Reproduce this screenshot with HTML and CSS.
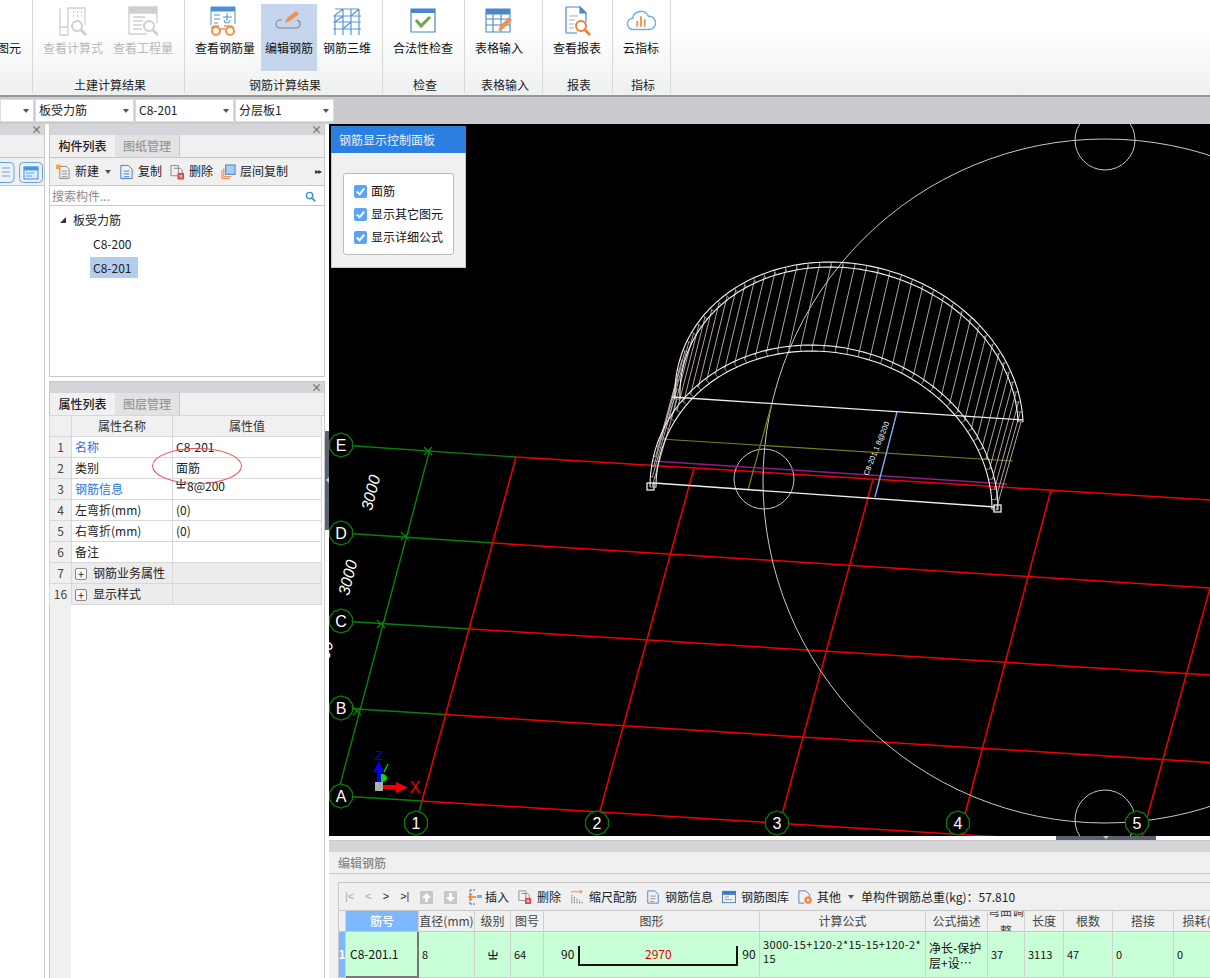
FILE: index.html
```html
<!DOCTYPE html>
<html lang="zh-CN">
<head>
<meta charset="utf-8">
<title>钢筋算量</title>
<link rel="stylesheet" href="styles.css">
</head>
<body>
<div class="app">
  <header class="ribbon">
    <section class="rib-group g0">
      <div class="rib-items end"><div class="rib-item"><span class="rib-icon"></span><span>图元</span></div></div>
      <div class="rib-label"></div>
    </section>
    <section class="rib-group g1">
      <div class="rib-items">
        <div class="rib-item off">
          <svg class="rib-icon" viewBox="0 0 30 30" fill="none" stroke="#cfcfcf" stroke-width="1.3"><path d="M2 2v27h8v-8H2M2 21h8M10 21V2h17v17"/><path d="M15 6h1M19 6h1M23 6h1M15 10h1M19 10h1M23 10h1" stroke-width="2"/><circle cx="19" cy="20" r="5" stroke-width="2"/><path d="M23 24l5 5" stroke-width="3"/></svg>
          <span>查看计算式</span>
        </div>
        <div class="rib-item off">
          <svg class="rib-icon" viewBox="0 0 30 30" fill="none" stroke="#cfcfcf" stroke-width="1.3"><path d="M1 1h28v6H1z" fill="#cfcfcf"/><path d="M1 7v21h18M29 7v10M5 11h12M5 15h10M5 19h9M5 23h9"/><circle cx="21" cy="20" r="5" stroke-width="2"/><path d="M25 24l5 5" stroke-width="3"/></svg>
          <span>查看工程量</span>
        </div>
      </div>
      <div class="rib-label">土建计算结果</div>
    </section>
    <section class="rib-group g2">
      <div class="rib-items">
        <div class="rib-item">
          <svg class="rib-icon" viewBox="0 0 30 30" fill="none" stroke="#4a90d9" stroke-width="1"><path d="M1 1h24v4H1z" fill="#4a90d9"/><path d="M1 5v14M25 5v13M4 9h6M4 13h6M4 17h4M13 11h9M17 7v8M20 14a3 3 0 0 1-6 0"/><path d="M1 22l3-2h5M14 20h7l3 2M10 23h5" stroke="#f0924a" stroke-width="1.6"/><circle cx="6" cy="25" r="4" stroke="#f0924a" stroke-width="2"/><circle cx="20" cy="25" r="4" stroke="#f0924a" stroke-width="2"/></svg>
          <span>查看钢筋量</span>
        </div>
        <div class="rib-item on">
          <svg class="rib-icon" viewBox="0 0 30 30" fill="none"><path d="M8 14H6a4 4 0 0 0 0 8h16a4 4 0 0 0 1-7.900" stroke="#7b8794" stroke-width="1.100"/><path d="M11 17l2-5 9-7 3 3-9 7z" fill="#f0924a"/></svg>
          <span>编辑钢筋</span>
        </div>
        <div class="rib-item">
          <svg class="rib-icon" viewBox="0 0 30 30" fill="none" stroke="#5b95d6" stroke-width="1.2"><path d="M3 9v20M11 3v26M19 3v26M27 3v26M3 9L11 3M3 3h24M1 10h28M1 16h28M1 23h28M3 16l8-6M11 23l8-7M19 10l8-7"/></svg>
          <span>钢筋三维</span>
        </div>
      </div>
      <div class="rib-label">钢筋计算结果</div>
    </section>
    <section class="rib-group g3">
      <div class="rib-items">
        <div class="rib-item">
          <svg class="rib-icon" viewBox="0 0 30 30" fill="none"><path d="M3 3h24v23H3z" stroke="#4a86c8" stroke-width="1.2"/><path d="M3 3h24v4H3z" fill="#4a86c8"/><path d="M8 14l5 6 9-9" stroke="#6aa84f" stroke-width="3"/></svg>
          <span>合法性检查</span>
        </div>
      </div>
      <div class="rib-label">检查</div>
    </section>
    <section class="rib-group g4">
      <div class="rib-items">
        <div class="rib-item">
          <svg class="rib-icon" viewBox="0 0 30 30" fill="none" stroke="#4a86c8" stroke-width="1.100"><path d="M2 3h24v5H2z" fill="#4a86c8"/><path d="M2 8v18h24V8M2 13h24M2 19h24M9 8v18M17 8v18"/><path d="M14 25l2-5 9-9 3 3-9 9z" fill="#f0924a" stroke="none"/></svg>
          <span>表格输入</span>
        </div>
      </div>
      <div class="rib-label">表格输入</div>
    </section>
    <section class="rib-group g5">
      <div class="rib-items">
        <div class="rib-item">
          <svg class="rib-icon" viewBox="0 0 30 30" fill="none" stroke="#4a86c8" stroke-width="1.200"><path d="M4 1h14l6 6v9M4 1v26h11"/><path d="M18 1l6 6h-6z" fill="#4a86c8"/><path d="M7 10h9M7 14h6M7 18h5M7 22h5" stroke="#aaa"/><circle cx="19" cy="20" r="5" stroke="#ee7d31" stroke-width="2"/><path d="M23 24l5 5" stroke="#ee7d31" stroke-width="2.600"/></svg>
          <span>查看报表</span>
        </div>
      </div>
      <div class="rib-label">报表</div>
    </section>
    <section class="rib-group g6">
      <div class="rib-items">
        <div class="rib-item">
          <svg class="rib-icon" viewBox="0 0 32 30" fill="none"><path d="M8 24a6 6 0 0 1-1-12 9 9 0 0 1 17-2 7 7 0 0 1 1 14z" stroke="#6ab0ee" stroke-width="1.500"/><path d="M12 15v6M16 10v11M20 13v8" stroke="#f0924a" stroke-width="2"/></svg>
          <span>云指标</span>
        </div>
      </div>
      <div class="rib-label">指标</div>
    </section>
    <div class="rib-rest"></div>
  </header>

  <div class="selects">
    <div class="sel w33"><span></span><i></i></div>
    <div class="sel"><span>板受力筋</span><i></i></div>
    <div class="sel"><span>C8-201</span><i></i></div>
    <div class="sel"><span>分层板1</span><i></i></div>
  </div>

  <main class="main">
    <aside class="col-a">
      <div class="pane-head"><b class="close">×</b></div>
      <div class="a-tabs"></div>
      <div class="a-tools">
        <svg viewBox="0 0 15 22" fill="none" stroke="#5aa6ee"><rect x="-8" y="1.500" width="22" height="20" rx="4"/><path d="M2 7h8M2 11h8M2 15h8"/></svg>
        <svg viewBox="0 0 24 22" fill="none" stroke="#5aa6ee"><rect x=".5" y="1.500" width="23" height="20" rx="4"/><rect x="5" y="6" width="14" height="12" fill="#dcecfb" stroke="#3d8fe0"/><path d="M5 6h14v3H5z" fill="#3d8fe0"/><path d="M7 12h8M7 15h6"/></svg>
      </div>
    </aside>

    <div class="col-b">
      <section class="pane pane-list">
        <div class="pane-head"><b class="close">×</b></div>
        <div class="tabs"><span class="tab active">构件列表</span><span class="tab">图纸管理</span></div>
        <div class="list-tools">
          <span class="tool"><svg viewBox="0 0 16 16" fill="none" stroke="#888"><path d="M4 2h7l3 3v10H4z"/><path d="M6 7h6M6 10h6M6 13h6"/><path d="M0 0h5v5H0z" fill="#f0a64a" stroke="none"/></svg>新建<i class="caret"></i></span>
          <span class="tool"><svg viewBox="0 0 16 16" fill="none" stroke="#3d7cc4"><path d="M2 1h8l4 4v10H2z"/><path d="M5 7h6M5 10h6M5 13h6"/></svg>复制</span>
          <span class="tool"><svg viewBox="0 0 16 16" fill="none" stroke="#888"><path d="M1 1h8v11H1z"/><path d="M4 4h7l2 2v4"/><path d="M8 9h7v7H8z" fill="#e0484a" stroke="none"/><path d="M10 11l3 3M13 11l-3 3" stroke="#fff"/></svg>删除</span>
          <span class="tool"><svg viewBox="0 0 16 16" fill="none" stroke="#ee7d31"><path d="M1 6v9h8M3 4v9h8"/><rect x="5" y="0.500" width="10" height="10" fill="#a8cdf5" stroke="#3d7cc4"/></svg>层间复制</span>
          <span class="more">▸▸</span>
        </div>
        <div class="search"><span>搜索构件...</span>
          <svg viewBox="0 0 12 12" fill="none" stroke="#3d8fd0" stroke-width="1.600"><circle cx="5" cy="5" r="3.500"/><path d="M8 8l3 3" stroke-width="2"/></svg>
        </div>
        <div class="tree">
          <div class="tree-root"><i></i>板受力筋</div>
          <div class="tree-leaf">C8-200</div>
          <div class="tree-leaf picked">C8-201</div>
        </div>
      </section>

      <section class="pane pane-props">
        <div class="pane-head"><b class="close">×</b></div>
        <div class="tabs"><span class="tab active">属性列表</span><span class="tab">图层管理</span></div>
        <div class="prop-wrap">
          <table class="props">
            <colgroup><col class="c-n"><col class="c-k"><col class="c-v"></colgroup>
            <thead><tr><th></th><th>属性名称</th><th>属性值</th></tr></thead>
            <tbody>
              <tr><th>1</th><td class="link">名称</td><td>C8-201</td></tr>
              <tr><th>2</th><td>类别</td><td>面筋</td></tr>
              <tr><th>3</th><td class="link">钢筋信息</td><td class="up"><svg class="grade" viewBox="0 0 9 9" fill="none" stroke="#222"><path d="M1 2v3h7V2M4.500 0v7M1 8h7"/></svg>8@200</td></tr>
              <tr><th>4</th><td>左弯折(mm)</td><td>(0)</td></tr>
              <tr><th>5</th><td>右弯折(mm)</td><td>(0)</td></tr>
              <tr><th>6</th><td>备注</td><td></td></tr>
              <tr class="grp"><th>7</th><td><i class="plus">+</i>钢筋业务属性</td><td></td></tr>
              <tr class="grp"><th>16</th><td><i class="plus">+</i>显示样式</td><td></td></tr>
            </tbody>
          </table>
          <div class="prop-foot"></div>
          <div class="mark"></div>
        </div>
      </section>
    </div>

    <div class="splitter"><i></i></div>

    <div class="col-c">
      <div class="view">
        <svg id="scene" class="scene" viewBox="329 124 881 712" font-family="'Liberation Sans',sans-serif">
          <defs>
            <polygon id="bub" points="11.400,3.700 7.050,9.700 0,12 -7.050,9.700 -11.400,3.700 -11.400,-3.700 -7.050,-9.700 0,-12 7.050,-9.700 11.400,-3.700" fill="#000" stroke="#0b7a0b" stroke-width="1.300"/>
          </defs>
          <g stroke="#0a800a" stroke-width="1.400" fill="none">
            <path d="M341 445L516 457M341 533L494 543M341 621L470 629M341 708L445 714.500M341 796L422 801"/>
            <path d="M416 823L422 801M597 823L600 811M777 823L780 822M430 449L336 800"/>
            <path d="M424 447l8 8M401 532l8 8M377 620l8 8M353 707l8 8M424 455l8-8M401 540l8-8M377 628l8-8M353 715l8-8"/>
          </g>
          <g stroke="#f00000" stroke-width="1.500" fill="none">
            <path d="M516 457L1210 500M494 543L1210 588M470 629L1210 675M445 714.500L1210 762.500M422 801L1210 850"/>
            <path d="M422 801L516 457M600 811L694 468M780 822L873 479M960 833L1051 490M1142 836L1210 588"/>
          </g>
          <g fill="none" stroke="#c8c8c8" stroke-width="1">
            <circle cx="1105" cy="481" r="342"/>
            <circle cx="1105" cy="140" r="30"/>
            <circle cx="764" cy="479" r="30"/>
            <circle cx="1105" cy="820" r="30"/>
          </g>
          <g fill="none" stroke-width="1.200">
            <path d="M660 439L1013 461M772 403L748 490" stroke="#80801a"/>
            <path d="M653 461L1007 484" stroke="#8a1f8a" stroke-width="1.500"/>
            <path d="M897 412L875 497" stroke="#7fa8f0" stroke-width="1.400"/>
          </g>
          <g id="arch" fill="none"></g>
          <g fill="none" stroke="#eee" stroke-width="1.300">
            <path d="M654 483L995 507M672 397L1023 420"/>
            <rect x="647" y="483" width="7" height="7"/>
            <rect x="994" y="505" width="7" height="7"/>
          </g>
          <text transform="translate(868 476) rotate(-68)" fill="#fff" font-size="7.500">C8-201.1 8@200</text>
          <g fill="#fff" font-size="16">
            <text transform="translate(376 494) rotate(-76)" text-anchor="middle" font-style="italic">3000</text>
            <text transform="translate(353 579) rotate(-76)" text-anchor="middle" font-style="italic">3000</text>
            <text transform="translate(329 660) rotate(-76)" text-anchor="middle" font-style="italic">3000</text>
          </g>
          <g fill="#fff" font-size="16" text-anchor="middle">
            <use href="#bub" x="341" y="445"/><text x="341" y="451">E</text>
            <use href="#bub" x="341" y="533"/><text x="341" y="539">D</text>
            <use href="#bub" x="341" y="621"/><text x="341" y="627">C</text>
            <use href="#bub" x="341" y="708"/><text x="341" y="714">B</text>
            <use href="#bub" x="341" y="796"/><text x="341" y="802">A</text>
            <use href="#bub" x="416" y="823"/><text x="416" y="829">1</text>
            <use href="#bub" x="597" y="823"/><text x="597" y="829">2</text>
            <use href="#bub" x="777" y="823"/><text x="777" y="829">3</text>
            <use href="#bub" x="958" y="823"/><text x="958" y="829">4</text>
            <use href="#bub" x="1137" y="823"/><text x="1137" y="829">5</text>
          </g>
          <g>
            <ellipse cx="382" cy="778" rx="5" ry="4" fill="#00e000"/>
            <path d="M384 772l4-8" stroke="#00e000" stroke-width="1.200"/>
            <path d="M379 782v-14" stroke="#0000f0" stroke-width="4"/>
            <path d="M373.500 772L378.500 761L384 772z" fill="#0000f0"/>
            <path d="M382 787h16" stroke="#f00000" stroke-width="4"/>
            <path d="M396 782L408 787.500L396 793z" fill="#f00000"/>
            <rect x="375" y="782" width="8" height="9" fill="#b0b0b0"/>
            <text x="379" y="760" fill="#0000f0" font-size="13" text-anchor="middle">Z</text>
            <text x="415" y="793" fill="#f00000" font-size="16" text-anchor="middle">X</text>
          </g>
        </svg>

        <div class="ctl">
          <div class="ctl-title">钢筋显示控制面板</div>
          <div class="ctl-body">
            <div class="ctl-box">
              <label class="chk"><i><svg viewBox="0 0 14 14" fill="none" stroke="#fff" stroke-width="2.200"><path d="M3 7l3 3 5-6"/></svg></i>面筋</label>
              <label class="chk"><i><svg viewBox="0 0 14 14" fill="none" stroke="#fff" stroke-width="2.200"><path d="M3 7l3 3 5-6"/></svg></i>显示其它图元</label>
              <label class="chk"><i><svg viewBox="0 0 14 14" fill="none" stroke="#fff" stroke-width="2.200"><path d="M3 7l3 3 5-6"/></svg></i>显示详细公式</label>
            </div>
          </div>
        </div>
      </div>

      <div class="view-gap"><div class="handle"></div></div>

      <section class="editor">
        <div class="ed-head"></div>
        <div class="ed-title">编辑钢筋</div>
        <div class="ed-box">
          <div class="ed-tools">
            <span class="nav"><em class="dim">|&lt;</em><em class="dim">&lt;</em><em>&gt;</em><em>&gt;<u>|</u></em></span>
            <svg class="sq" viewBox="0 0 13 13"><rect width="13" height="13" fill="#c8c8c8"/><path d="M6.500 2L11 7H8v4H5V7H2z" fill="#fff"/></svg>
            <svg class="sq sq2" viewBox="0 0 13 13"><rect width="13" height="13" fill="#c8c8c8"/><path d="M6.500 11L11 6H8V2H5v4H2z" fill="#fff"/></svg>
            <span class="tool t-ins"><svg viewBox="0 0 14 16" fill="none" stroke="#666"><path d="M2 1h5M2 15h5M2 1v14" stroke-dasharray="2 1"/><path d="M8 8H1M4 5L1 8l3 3" stroke="#ee7d31" stroke-width="1.400"/><path d="M9 6h5v3H9z" fill="#6ab0ee" stroke="none"/></svg>插入</span>
            <span class="tool"><svg viewBox="0 0 16 16" fill="none" stroke="#888"><path d="M1 1h8v11H1z"/><path d="M4 4h7l2 2v4"/><path d="M8 9h7v7H8z" fill="#e0484a" stroke="none"/><path d="M10 11l3 3M13 11l-3 3" stroke="#fff"/></svg>删除</span>
            <span class="tool"><svg viewBox="0 0 16 16" fill="none" stroke="#6a7a8a"><path d="M1 2h12" stroke="#ee7d31"/><path d="M11 0l3 2-3 2" stroke="#ee7d31"/><path d="M2 15V6M5 15V8M8 15V10M11 15v-3M14 15v-1" stroke-dasharray="1 1" stroke-width="1.400"/></svg>缩尺配筋</span>
            <span class="tool"><svg viewBox="0 0 16 16" fill="none" stroke="#3d7cc4"><path d="M2 1h8l4 4v10H2z"/><path d="M5 7h6M5 10h6M5 13h4" stroke="#888"/></svg>钢筋信息</span>
            <span class="tool"><svg viewBox="0 0 16 16" fill="none" stroke="#3d7cc4"><rect x=".5" y="1.500" width="15" height="13"/><path d="M1 2h14v3H1z" fill="#3d7cc4"/><path d="M3 8h5M3 11h9" stroke="#ee7d31"/></svg>钢筋图库</span>
            <span class="tool"><svg viewBox="0 0 16 16" fill="none" stroke="#3d7cc4"><path d="M1 1h8l4 4v3M1 1v14h6"/><circle cx="11.500" cy="11.500" r="3" stroke="#ee7d31" stroke-width="2.400"/></svg>其他<i class="caret"></i></span>
            <span class="total">单构件钢筋总重(kg)：57.810</span>
          </div>
          <div class="sheet">
            <div class="h c0"></div>
            <div class="h key">筋号</div>
            <div class="h">直径(mm)</div>
            <div class="h">级别</div>
            <div class="h">图号</div>
            <div class="h">图形</div>
            <div class="h">计算公式</div>
            <div class="h">公式描述</div>
            <div class="h wrap">弯曲调整</div>
            <div class="h">长度</div>
            <div class="h">根数</div>
            <div class="h">搭接</div>
            <div class="h">损耗(%)</div>

            <div class="d num">1</div>
            <div class="d sel-cell">C8-201.1</div>
            <div class="d sm">8</div>
            <div class="d ctr"><svg class="grade big" viewBox="0 0 9 9" fill="none" stroke="#111"><path d="M1 2v3h7V2M4.500 0v7M1 8h7"/></svg></div>
            <div class="d sm">64</div>
            <div class="d shape"><span>90</span><div class="u">2970</div><span>90</span></div>
            <div class="d formula">3000-15+120-2*15-15+120-2*<br>15</div>
            <div class="d desc">净长-保护<br>层+设…</div>
            <div class="d sm">37</div>
            <div class="d sm">3113</div>
            <div class="d sm">47</div>
            <div class="d sm">0</div>
            <div class="d sm">0</div>
          </div>
        </div>
      </section>
    </div>
  </main>
</div>
<script src="canvas.js"></script>
</body>
</html>
```

FILE: styles.css
```css
* { box-sizing: border-box; }
html, body { margin: 0; padding: 0; background: #fff; }
body { width: 1210px; height: 978px; overflow: hidden; font: 12px/1.2 "Noto Sans CJK SC", "Noto Sans", sans-serif; color: #222; }
i, em { font-style: normal; }
.app { width: 1210px; height: 978px; display: flex; flex-direction: column; }

/* ribbon */
.ribbon { height: 97px; flex: none; display: flex; background: linear-gradient(#ffffff 30%, #eef0f0); border-bottom: 2px solid #96989b; }
.rib-group { flex: none; display: flex; flex-direction: column; border-right: 1px solid #d6d8d8; height: 93px; padding: 4px 6px 0; }
.g0 { width: 33px; padding: 4px 0 0; overflow: hidden; }
.g1 { width: 152px; } .g2 { width: 198px; } .g3 { width: 82px; } .g4 { width: 78px; } .g5 { width: 70px; } .g6 { width: 58px; }
.rib-items { display: flex; gap: 2px; height: 67px; }
.rib-items.end { justify-content: flex-end; padding-right: 4px; }
.rib-item { padding: 2px 4px 0; display: flex; flex-direction: column; align-items: center; height: 67px; white-space: nowrap; color: #111; }
.g0 .rib-item { padding: 2px 4px 0 0; }
.rib-item.on { background: #c5d6ec; }
.rib-item.off { color: #b9b9b9; }
.rib-icon { display: block; width: 30px; height: 30px; margin-bottom: 5px; flex: none; }
.rib-label { text-align: center; margin-top: 7px; padding-left: 3px; color: #222; white-space: nowrap; }
.rib-rest { flex: 1; }

/* selects */
.selects { height: 27px; flex: none; display: flex; gap: 1px; background: #c9cbce; padding: 2px 0 0; }
.sel { width: 99px; height: 23px; background: #fff; border: 1px solid #dcdcdc; display: flex; align-items: center; justify-content: space-between; padding: 0 4px 0 3px; font-size: 12px; }
.sel.w33 { width: 34px; }
.sel i { width: 0; height: 0; border: 3px solid transparent; border-top: 4px solid #555; border-bottom: 0; }

/* columns */
.main { flex: 1; display: flex; min-height: 0; }
.col-a { width: 45px; flex: none; border-right: 1px solid #c8c8c8; margin-right: 4px; background: #fff; }
.col-b { width: 276px; flex: none; display: flex; flex-direction: column; gap: 4px; }
.splitter { width: 4px; flex: none; position: relative; background: #fff; }
.splitter i { position: absolute; left: 0; top: 307px; width: 4px; height: 99px; background: #5a6470; }
.splitter i::after { content: ""; position: absolute; left: 1px; top: 46px; border: 3px solid transparent; border-right: 3px solid #c8ccd0; border-left: 0; }
.col-c { flex: 1; min-width: 0; display: flex; flex-direction: column; }

.pane-head { height: 11px; background: #d3d5d8; position: relative; }
.close { position: absolute; right: 2px; top: -1px; font-size: 11px; line-height: 12px; font-weight: 700; color: #777; }

.a-tabs { height: 23px; background: #f0f0f0; border-bottom: 1px solid #c8c8c8; }
.a-tools { height: 28px; background: #f0f0f0; border-bottom: 1px solid #c8c8c8; display: flex; gap: 4px; align-items: center; }
.a-tools svg { display: block; height: 22px; flex: none; }
.a-tools svg:first-child { width: 15px; }
.a-tools svg:last-child { width: 24px; }

.pane { border-left: 1px solid #c8c8c8; border-right: 1px solid #c8c8c8; background: #fff; display: flex; flex-direction: column; }
.pane-list { height: 253px; border-bottom: 1px solid #c8c8c8; flex: none; }
.pane-props { flex: 1; min-height: 0; border-top: 1px solid #c8c8c8; }
.tabs { height: 23px; background: #f0f0f0; display: flex; border-bottom: 1px solid #c8c8c8; flex: none; }
.tab { width: 65px; text-align: center; line-height: 22px; font-weight: 500; color: #999; background: #e2e2e2; border-right: 1px solid #c8c8c8; }
.tab.active { color: #222; background: #f0f0f0; border-right: 0; }

.list-tools { height: 28px; flex: none; background: #f0f0f0; border-bottom: 1px solid #c8c8c8; display: flex; align-items: center; padding-left: 6px; gap: 8px; position: relative; }
.tool { display: inline-flex; align-items: center; gap: 4px; white-space: nowrap; color: #222; }
.tool svg { width: 15px; height: 16px; flex: none; display: block; }
.caret { width: 0; height: 0; border: 3px solid transparent; border-top: 4px solid #555; border-bottom: 0; margin-left: 2px; }
.more { position: absolute; right: 3px; top: 8px; font-size: 8px; letter-spacing: -1px; color: #333; }

.search { height: 20px; flex: none; border-bottom: 1px solid #c8c8c8; display: flex; align-items: center; justify-content: space-between; padding: 2px 8px 0 2px; color: #8a8a8a; }
.search svg { width: 11px; height: 11px; }
.tree { flex: 1; padding: 3px 0 0; position: relative; }
.tree-root { height: 21px; line-height: 21px; padding-left: 23px; position: relative; color: #222; }
.tree-root i { position: absolute; left: 10px; top: 8px; width: 0; height: 0; border-left: 6px solid transparent; border-bottom: 6px solid #333; }
.tree-leaf { height: 21px; line-height: 21px; margin: 3px 0 0 40px; padding: 0 3px; width: 48px; color: #222; }
.tree-leaf.picked { background: #b3cdec; }

/* properties */
.prop-wrap { flex: 1; position: relative; min-height: 0; background: #fff; }
.props { width: 272px; border-collapse: collapse; table-layout: fixed; margin: -1px 0 0 -1px; }
.c-n { width: 22px; } .c-k { width: 101px; } .c-v { width: 149px; }
.props th, .props td { height: 21px; padding: 0; border: 1px solid #d8d8d8; font-weight: 400; white-space: nowrap; overflow: hidden; }
.props thead th { background: #f0f0f0; text-align: center; color: #333; }
.props tbody th { background: #f0f0f0; text-align: center; color: #444; }
.props td { padding-left: 3px; }
.props .link { color: #2d6fe0; }
.props .up { vertical-align: top; }
.grp td { background: #ececec; }
.plus { display: inline-block; width: 12px; height: 12px; border: 1px solid #888; border-radius: 2px; text-align: center; line-height: 10px; margin: 0 6px 0 0; vertical-align: -1px; font-size: 11px; background: #fafafa; }
.grade { width: 10px; height: 10px; display: inline-block; vertical-align: 2px; margin-right: 1px; }
.grade.big { width: 10px; height: 10px; vertical-align: middle; margin-right: 0; }
.prop-foot { position: absolute; left: 0; top: 188px; bottom: 0; width: 21px; background: #f0f0f0; }
.mark { position: absolute; left: 102px; top: 32px; width: 90px; height: 36px; border: 1px solid #e8505a; border-radius: 50%; }

/* viewport */
.view { height: 712px; flex: none; position: relative; background: #000; overflow: hidden; }
.scene { display: block; width: 881px; height: 712px; }
.ctl { position: absolute; left: 2px; top: 2px; width: 135px; height: 142px; background: #f0f0f0; border: 1px solid #c8c8c8; border-top: 0; }
.ctl-title { height: 27px; background: #2b7fe0; color: #e8f2ff; line-height: 27px; padding-left: 8px; margin: 0 -1px 0 -1px; }
.ctl-body { padding: 20px 11px 0; }
.ctl-box { height: 82px; background: #fff; border: 1px solid #bdbdbd; border-radius: 3px; padding: 6px 0 0 10px; }
.chk { display: flex; align-items: center; gap: 4px; height: 23px; color: #111; }
.chk i { width: 13px; height: 13px; background: #5ba4f5; border-radius: 2px; display: block; flex: none; }
.chk svg { display: block; width: 13px; height: 13px; }

.view-gap { height: 4px; flex: none; background: #fff; position: relative; }
.handle { position: absolute; left: 727px; top: 0; width: 100px; height: 4px; background: #5a6470; }
.handle::after { content: ""; position: absolute; left: 47px; top: 0; border: 3px solid transparent; border-top: 3px solid #c8ccd0; border-bottom: 0; }

/* editor */
.editor { flex: 1; min-height: 0; background: #f0f0f0; overflow: hidden; }
.ed-head { height: 12px; background: #d3d5d8; border-top: 1px solid #c8c8c8; }
.ed-title { height: 22px; line-height: 21px; padding-left: 9px; color: #888; font-weight: 500; border-bottom: 1px solid #c8c8c8; }
.ed-box { margin: 8px 0 0 9px; border-top: 1px solid #c8c8c8; border-left: 1px solid #c8c8c8; width: 900px; }
.ed-tools { height: 27px; display: flex; align-items: center; gap: 9px; padding: 1px 0 0 6px; white-space: nowrap; }
.nav { display: flex; width: 66px; flex: none; color: #222; font-family: "Liberation Sans", sans-serif; font-size: 11px; gap: 11px; }
.nav .dim { color: #aaa; }
.nav u { text-decoration: none; color: #8a2020; }
.sq { width: 13px; height: 13px; flex: none; }
.sq2 { margin-left: 2px; }
.t-ins { margin-left: 2px; }
.ed-tools .tool { gap: 5px; }
.ed-tools .tool svg { width: 14px; }
.ed-tools .t-ins { gap: 3px; }
.total { margin-left: -2px; }

.sheet { display: grid; grid-template-columns: 7px 73px 56px 36px 33px 216px 166px 62px 37px 39px 49px 61px 61px; grid-template-rows: 22px 46px; }
.h { background: #f0f0f0; border-top: 1px solid #c8c8c8; border-right: 1px solid #d0d0d0; border-bottom: 1px solid #c8c8c8; text-align: center; line-height: 20px; color: #444; white-space: nowrap; overflow: hidden; }
.h.key { background: #7cb8fb; color: #fff; font-weight: 500; }
.h.wrap { white-space: normal; display: flex; align-items: center; justify-content: center; line-height: 20px; }
.d { background: #c9ffd6; border-right: 1px solid #d0d0d0; border-bottom: 1px solid #d0d0d0; display: flex; align-items: center; overflow: hidden; color: #111; }
.d.num { background: #7cb8fb; color: #fff; font-weight: 700; justify-content: center; }
.d.sel-cell { border-right: 2px solid #777; border-bottom: 2px solid #777; padding-left: 4px; font-size: 12px; }
.d.sm { padding-left: 3px; font-size: 11px; }
.d.ctr { justify-content: center; }
.d.shape { padding-left: 17px; gap: 4px; font-size: 12px; }
.u { width: 160px; height: 20px; margin-top: 2px; border: 2px solid #111; border-top: 0; color: #e00000; text-align: center; line-height: 16px; }
.d.formula { font-size: 11px; letter-spacing: .4px; line-height: 14px; padding-left: 3px; display: block; padding-top: 5px; white-space: nowrap; }
.d.desc { line-height: 15px; padding-left: 3px; white-space: nowrap; }
```

FILE: canvas.js
```js
(function () {
  var ns = "http://www.w3.org/2000/svg";
  var arch = document.getElementById("arch");
  var cx = 824, cy = 498.5, rx = 174, ry = 153, tilt = 0.066;

  function pt(t, adj, back) {
    var x = cx + (rx - adj) * Math.cos(t);
    var y = cy - (ry - adj) * Math.sin(t) + tilt * (x - cx);
    if (back) {
      x += 25 - 6 * Math.sin(t);
      y += -88 + 5 * Math.sin(t);
    }
    return [x, y];
  }
  function add(d, stroke, width) {
    var p = document.createElementNS(ns, "path");
    p.setAttribute("d", d);
    p.setAttribute("stroke", stroke);
    p.setAttribute("stroke-width", width);
    arch.appendChild(p);
  }
  function curve(adj, back) {
    var d = "";
    for (var i = 0; i <= 120; i++) {
      var q = pt(Math.PI * i / 120, adj, back);
      d += (i ? "L" : "M") + q[0].toFixed(1) + " " + q[1].toFixed(1);
    }
    return d;
  }
  function seg(a, b) {
    return "M" + a[0].toFixed(1) + " " + a[1].toFixed(1) + "L" + b[0].toFixed(1) + " " + b[1].toFixed(1);
  }

  var ribs = "", ticks = "";
  for (var i = 0; i < 47; i++) {
    var t = Math.PI * i / 46;
    ribs += seg(pt(t, 2, false), pt(t, 2, true));
    ticks += seg(pt(t, 0, false), pt(t, 6, false));
    ticks += seg(pt(t, 0, true), pt(t, 5, true));
  }
  add(ribs, "#b0a4a0", 1);
  add(ticks, "#8f8582", 1);
  add(curve(0, false), "#f0f0f0", 1.1);
  add(curve(6, false), "#f0f0f0", 1.1);
  add(curve(0, true), "#f0f0f0", 1.1);
  add(curve(5, true), "#f0f0f0", 1.1);
})();
```
